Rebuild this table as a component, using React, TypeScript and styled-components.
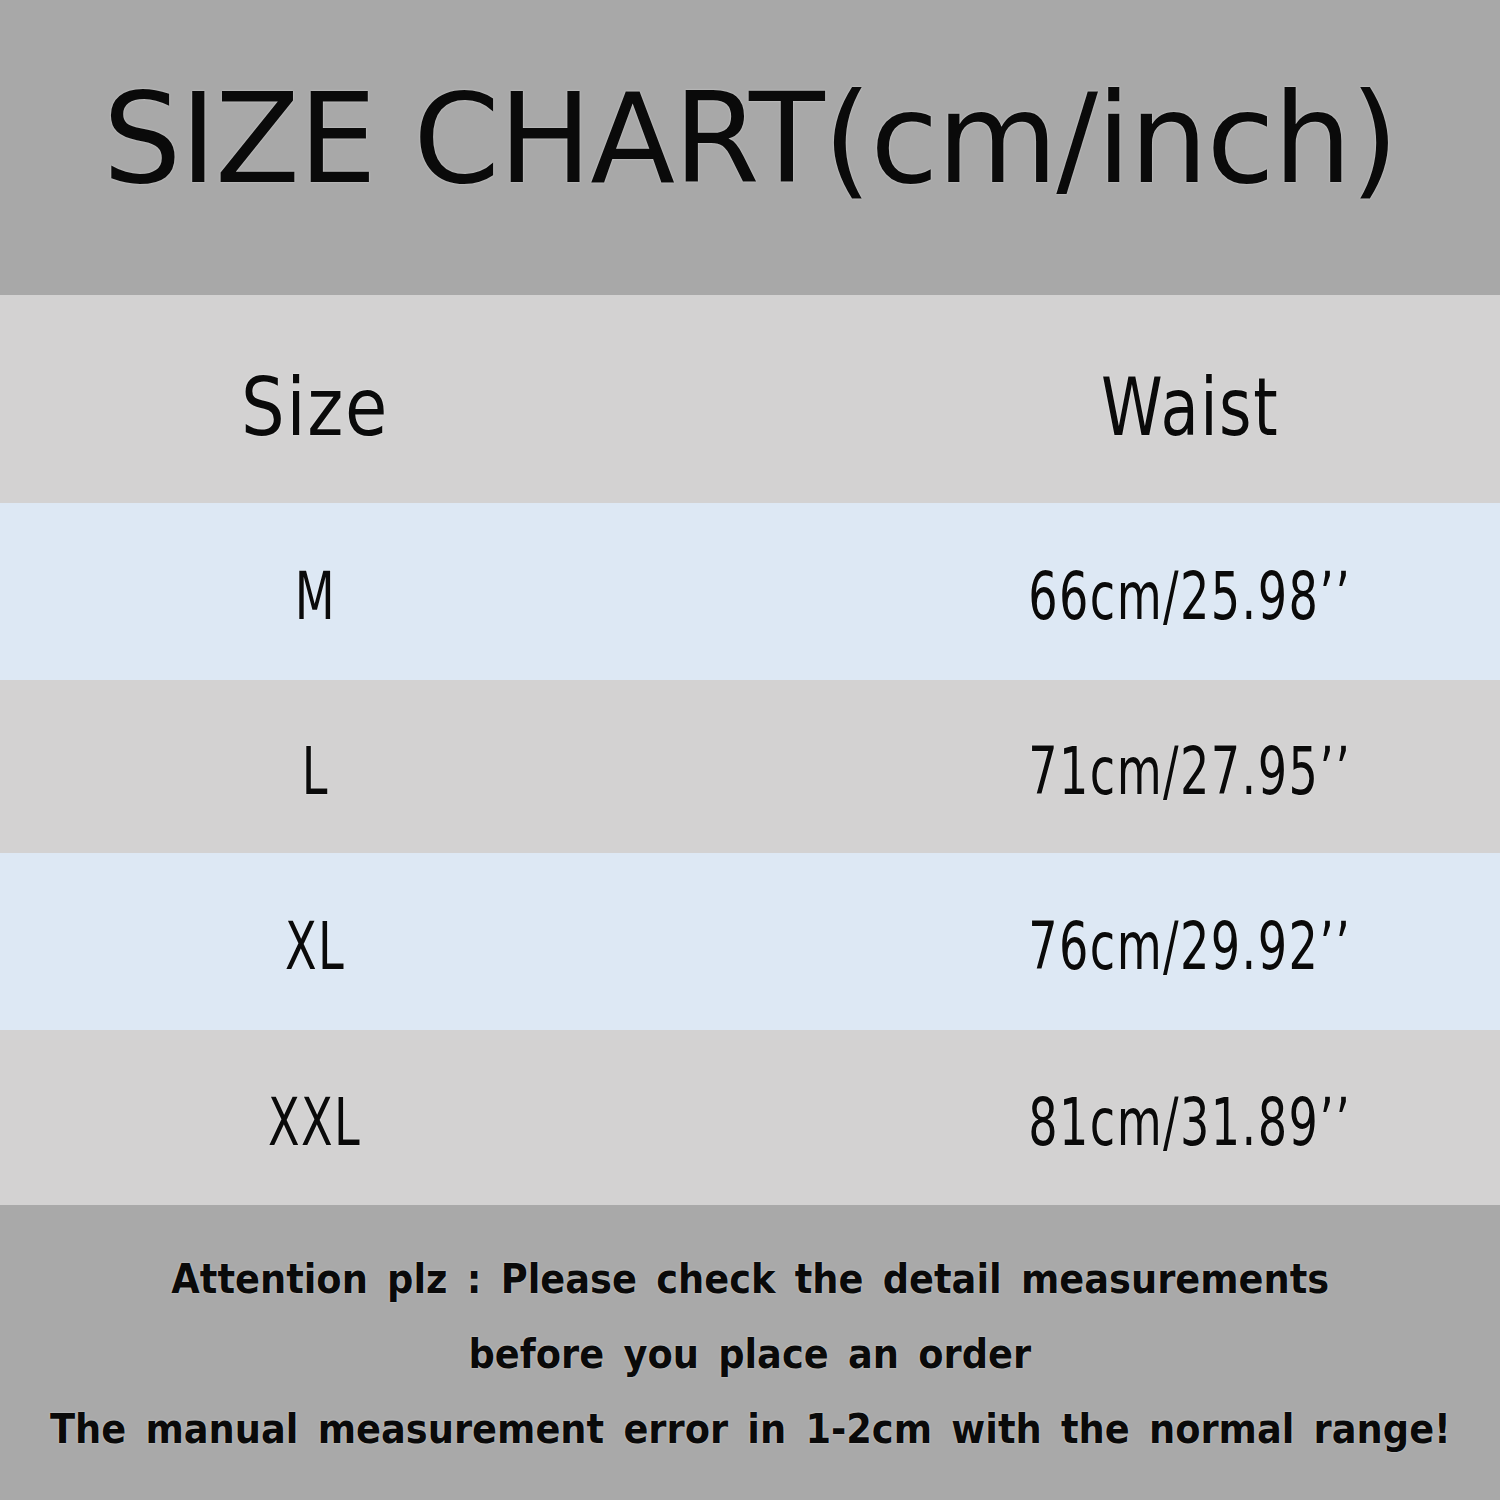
import React from "react";
import styled, { createGlobalStyle } from "styled-components";

const GlobalStyle = createGlobalStyle`
  html, body {
    margin: 0;
    padding: 0;
    background: #a8a8a8;
  }
`;

const Page = styled.div`
  width: 1500px;
  height: 1500px;
  display: flex;
  flex-direction: column;
  overflow: hidden;
  color: #0a0a0a;
`;

const TitleBand = styled.div`
  height: 295px;
  background: #a8a8a8;
  display: flex;
  align-items: center;
  justify-content: center;
`;

const Title = styled.h1`
  margin: 0 0 18px 0;
  font-family: "DejaVu Sans", "Noto Sans", sans-serif;
  font-weight: 400;
  font-size: 124px;
  letter-spacing: -1.5px;
  text-shadow: 0 0 2px rgba(255, 255, 255, 0.6);
`;

const Row = styled.div<{ $bg: string; $h: number; $shift: number }>`
  height: ${(p) => p.$h}px;
  box-sizing: border-box;
  padding-top: ${(p) => p.$shift}px;
  background: ${(p) => p.$bg};
  display: grid;
  grid-template-columns: 630px 1fr;
  align-items: center;
`;

const Cell = styled.div`
  text-align: center;
`;

const ValueCell = styled(Cell)`
  padding-left: 250px;
`;

const Label = styled.span<{ $size: number; $squeeze: number }>`
  display: inline-block;
  font-family: "DejaVu Sans", sans-serif;
  font-size: ${(p) => p.$size}px;
  letter-spacing: 2px;
  transform: scaleX(${(p) => p.$squeeze});
  text-shadow: 0 0 2px rgba(255, 255, 255, 0.7);
`;

const Footer = styled.div`
  flex: 1;
  background: #a9a9a9;
  display: flex;
  flex-direction: column;
  align-items: center;
  justify-content: center;
  padding-top: 4px;
`;

const Note = styled.div`
  display: inline-block;
  font-family: "DejaVu Sans", sans-serif;
  font-weight: 700;
  font-size: 40px;
  line-height: 75px;
  word-spacing: 7px;
  white-space: nowrap;
  transform: scaleX(0.92);
  text-shadow: 0 0 2px rgba(255, 255, 255, 0.6);
`;

const rows = [
  { size: "M", waist: "66cm/25.98’’", bg: "#dde8f4", h: 177 },
  { size: "L", waist: "71cm/27.95’’", bg: "#d3d2d2", h: 173 },
  { size: "XL", waist: "76cm/29.92’’", bg: "#dde8f4", h: 177 },
  { size: "XXL", waist: "81cm/31.89’’", bg: "#d3d2d2", h: 175 },
];

export default function App() {
  return (
    <Page>
      <GlobalStyle />
      <TitleBand>
        <Title>SIZE CHART(cm/inch)</Title>
      </TitleBand>
      <Row $bg="#d3d2d2" $h={208} $shift={16}>
        <Cell>
          <Label $size={80} $squeeze={0.86}>Size</Label>
        </Cell>
        <ValueCell>
          <Label $size={80} $squeeze={0.78}>Waist</Label>
        </ValueCell>
      </Row>
      {rows.map((r) => (
        <Row key={r.size} $bg={r.bg} $h={r.h} $shift={10}>
          <Cell>
            <Label $size={66} $squeeze={0.7}>{r.size}</Label>
          </Cell>
          <ValueCell>
            <Label $size={66} $squeeze={0.7}>{r.waist}</Label>
          </ValueCell>
        </Row>
      ))}
      <Footer>
        <Note>Attention plz : Please check the detail measurements</Note>
        <Note>before you place an order</Note>
        <Note>The manual measurement error in 1-2cm with the normal range!</Note>
      </Footer>
    </Page>
  );
}
